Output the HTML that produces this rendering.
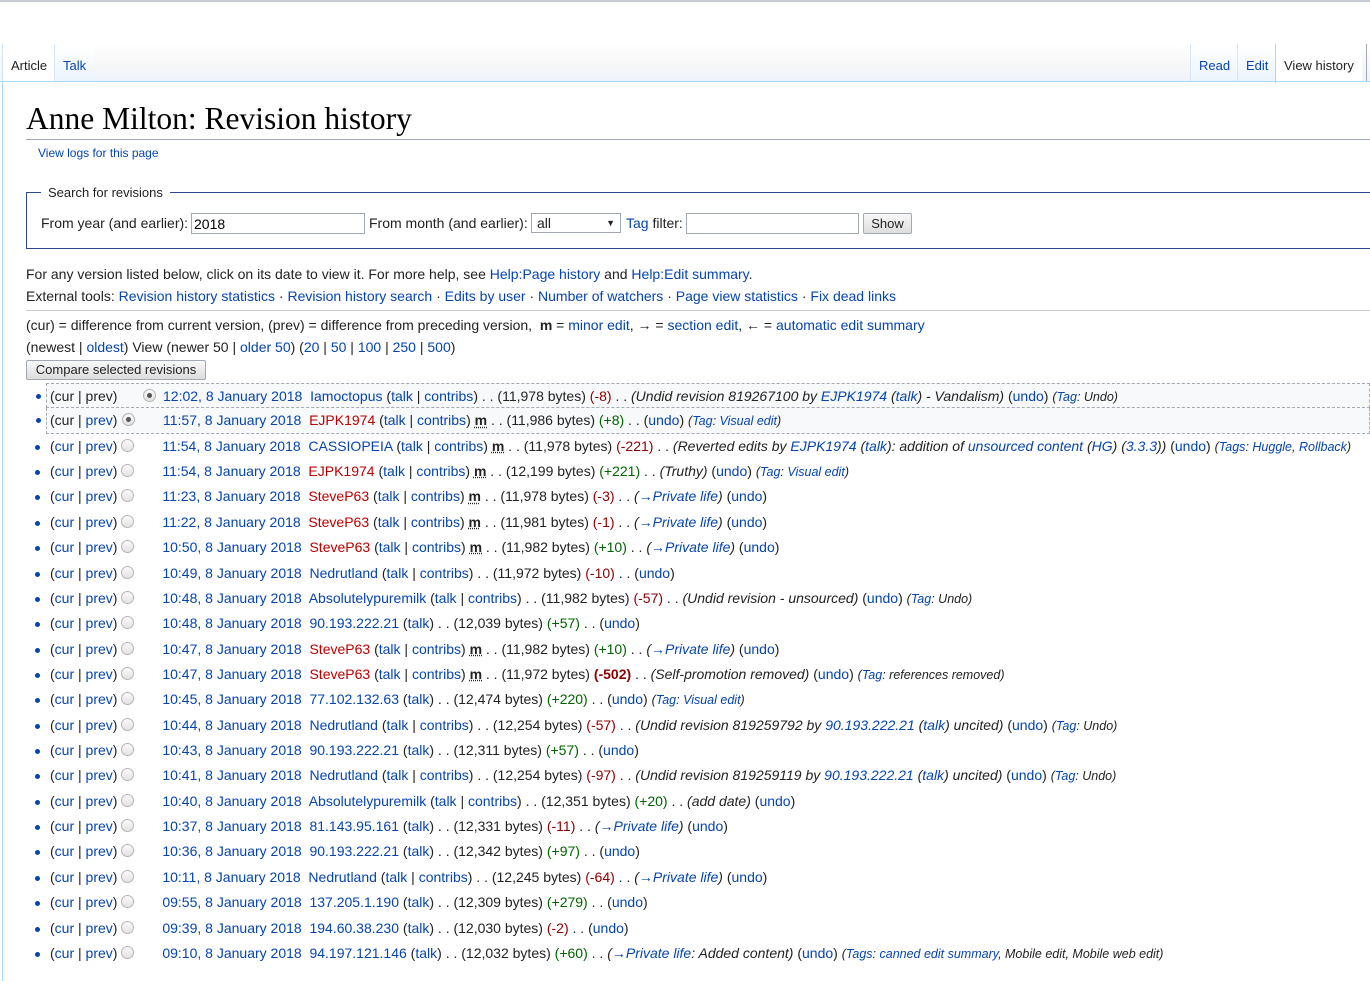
<!DOCTYPE html>
<html><head><meta charset="utf-8"><style>
*{margin:0;padding:0;box-sizing:border-box}
body{width:1370px;height:969px;overflow:hidden;background:#fff;font-family:"Liberation Sans",Arial,sans-serif;font-size:14px;color:#222;position:relative}
a{color:#0645ad;text-decoration:none}
.r{color:#ba0000}
.abs{position:absolute;white-space:nowrap}
#topline{position:absolute;left:0;top:0;width:1370px;height:2px;background:#c8ccd1}
#tabbar{position:absolute;left:0;top:44px;width:1370px;height:38px;background:linear-gradient(#fff,#f6f6f6 60%,#eef4fb);border-bottom:1px solid #a7d7f9}
.tab{position:absolute;top:44px;height:38px;line-height:44px;font-size:13px;padding:0 8px;border-left:1px solid #d5e6f5;background:linear-gradient(#fff 10%,#eaf3fb)}
.tab.sel{background:#fff;height:39px;color:#222}
#content{position:absolute;left:2px;top:81px;width:1368px;height:900px;border-left:1px solid #a7d7f9;border-top:1px solid #a7d7f9}
h1{position:absolute;left:26px;top:100px;font-family:"Liberation Serif",Georgia,serif;font-weight:normal;font-size:31.5px;color:#000;width:1344px;border-bottom:1px solid #a2a9b1;padding-bottom:1px;line-height:38px}
fieldset{position:absolute;left:26px;top:185px;width:1350px;height:64px;border:1px solid #2a4b8d;border-right:none}
legend{font-size:13px;margin-left:14px;padding:0 7px}
input.t{position:absolute;height:21px;border:1px solid #a2a9b1;font:14px "Liberation Sans",sans-serif;padding:1px 2px}
.hr{position:absolute;left:26px;width:1344px;height:1px;background:#c8ccd1}
ul{position:absolute;left:0;top:383px;list-style:none;width:1370px}
li{position:relative;height:25.36px;line-height:25.36px;white-space:nowrap;padding-left:50px}
li:before{content:"";position:absolute;left:35px;top:11px;width:5px;height:5px;border-radius:50%;background:#0645ad}
.hl{background:#f8f9fa;border:1px dashed #a2a9b1;margin-left:46px;padding-left:3px}
.hl:before{left:-11px;top:10px}
.radio{display:inline-block;width:13px;height:13px;border-radius:50%;border:1px solid #b5b5b5;background:linear-gradient(#fafafa,#e3e3e3);vertical-align:-1px;position:relative}
.radio.on:after{content:"";position:absolute;left:3px;top:3px;width:5px;height:5px;border-radius:50%;background:#555}
.cp{display:inline-block;width:93px}
.d{color:#0645ad;margin-left:28px}
.c{font-style:italic;color:#222}
.c a{color:#0645ad}
.tg{font-style:italic;font-size:12.5px}
.g{color:#006400}
.n{color:#8b0000}
b.m{text-decoration:underline dotted;font-weight:bold}
</style></head><body>
<div id="topline"></div>
<div id="tabbar"></div>
<div class="tab sel" style="left:2px">Article</div>
<div class="tab" style="left:54px"><a>Talk</a></div>
<div class="tab" style="left:1190px"><a>Read</a></div>
<div class="tab" style="left:1237px"><a>Edit</a></div>
<div class="tab sel" style="left:1275px;border-left:1px solid #a7d7f9">View history</div>
<div class="tab" style="left:1366px;border-left:1px solid #a2a9b1;width:6px"></div>
<div id="content"></div>
<h1>Anne Milton: Revision history</h1>
<div class="abs" style="left:38px;top:146px;font-size:12px"><a>View logs for this page</a></div>
<fieldset><legend>Search for revisions</legend></fieldset>
<div class="abs" style="left:41px;top:215px">From year (and earlier):</div>
<input class="t" style="left:191px;top:213px;width:174px" value="2018">
<div class="abs" style="left:369px;top:215px">From month (and earlier):</div>
<div class="abs" style="left:531px;top:213px;width:90px;height:20px;border:1px solid #a2a9b1;font-size:14px;padding-left:5px;line-height:18px">all<span style="position:absolute;right:5px;font-size:9px">▼</span></div>
<div class="abs" style="left:626px;top:215px"><a>Tag</a> filter:</div>
<input class="t" style="left:686px;top:213px;width:173px">
<div class="abs" style="left:863px;top:213px;width:49px;height:21px;border:1px solid #a2a9b1;border-radius:2px;background:linear-gradient(#f8f8f8,#ddd);font-size:13px;text-align:center;line-height:19px">Show</div>
<div class="abs" style="left:26px;top:266px">For any version listed below, click on its date to view it. For more help, see <a>Help:Page history</a> and <a>Help:Edit summary</a>.</div>
<div class="abs" style="left:26px;top:288px">External tools: <a>Revision history statistics</a> · <a>Revision history search</a> · <a>Edits by user</a> · <a>Number of watchers</a> · <a>Page view statistics</a> · <a>Fix dead links</a></div>
<div class="hr" style="top:310px"></div>
<div class="abs" style="left:26px;top:317px">(cur) = difference from current version, (prev) = difference from preceding version, &nbsp;<b>m</b> = <a>minor edit</a>, → = <a>section edit</a>, ← = <a>automatic edit summary</a></div>
<div class="abs" style="left:26px;top:339px">(newest | <a>oldest</a>) View (newer 50 | <a>older 50</a>) (<a>20</a> | <a>50</a> | <a>100</a> | <a>250</a> | <a>500</a>)</div>
<div class="abs" style="left:26px;top:360px;width:180px;height:20px;border:1px solid #a2a9b1;border-radius:2px;background:linear-gradient(#f8f8f8,#ddd);font-size:13px;text-align:center;line-height:18px">Compare selected revisions</div>
<ul>
<li class="hl"><span class="cp">(cur | prev)</span><span class="radio on"></span><span class="d" style="margin-left:7px">12:02, 8 January 2018</span>&nbsp; <a>Iamoctopus</a> (<a>talk</a> | <a>contribs</a>) . . (11,978 bytes) <span class="n">(-8)</span> . . <span class="c">(Undid revision 819267100 by <a>EJPK1974</a> (<a>talk</a>) - Vandalism)</span> (<a>undo</a>) <span class="tg">(<a>Tag</a>: Undo)</span></li>
<li class="hl" style="border-top:none"><span style="display:inline-block;width:72px">(cur | <a>prev</a>)</span><span class="radio on"></span><span class="d">11:57, 8 January 2018</span>&nbsp; <a class="r">EJPK1974</a> (<a>talk</a> | <a>contribs</a>) <b class="m">m</b> . . (11,986 bytes) <span class="g">(+8)</span> . . (<a>undo</a>) <span class="tg">(<a>Tag</a>: <a>Visual edit</a>)</span></li>
<li>(<a>cur</a> | <a>prev</a>) <span class="radio"></span><span class="d">11:54, 8 January 2018</span>&nbsp; <a>CASSIOPEIA</a> (<a>talk</a> | <a>contribs</a>) <b class="m">m</b> . . (11,978 bytes) <span class="n">(-221)</span> . . <span class="c">(Reverted edits by <a>EJPK1974</a> (<a>talk</a>): addition of <a>unsourced content</a> (<a>HG</a>) (<a>3.3.3</a>))</span> (<a>undo</a>) <span class="tg">(<a>Tags</a>: <a>Huggle</a>, <a>Rollback</a>)</span></li>
<li>(<a>cur</a> | <a>prev</a>) <span class="radio"></span><span class="d">11:54, 8 January 2018</span>&nbsp; <a class="r">EJPK1974</a> (<a>talk</a> | <a>contribs</a>) <b class="m">m</b> . . (12,199 bytes) <span class="g">(+221)</span> . . <span class="c">(Truthy)</span> (<a>undo</a>) <span class="tg">(<a>Tag</a>: <a>Visual edit</a>)</span></li>
<li>(<a>cur</a> | <a>prev</a>) <span class="radio"></span><span class="d">11:23, 8 January 2018</span>&nbsp; <a class="r">SteveP63</a> (<a>talk</a> | <a>contribs</a>) <b class="m">m</b> . . (11,978 bytes) <span class="n">(-3)</span> . . <span class="c">(<a>→Private life</a>)</span> (<a>undo</a>)</li>
<li>(<a>cur</a> | <a>prev</a>) <span class="radio"></span><span class="d">11:22, 8 January 2018</span>&nbsp; <a class="r">SteveP63</a> (<a>talk</a> | <a>contribs</a>) <b class="m">m</b> . . (11,981 bytes) <span class="n">(-1)</span> . . <span class="c">(<a>→Private life</a>)</span> (<a>undo</a>)</li>
<li>(<a>cur</a> | <a>prev</a>) <span class="radio"></span><span class="d">10:50, 8 January 2018</span>&nbsp; <a class="r">SteveP63</a> (<a>talk</a> | <a>contribs</a>) <b class="m">m</b> . . (11,982 bytes) <span class="g">(+10)</span> . . <span class="c">(<a>→Private life</a>)</span> (<a>undo</a>)</li>
<li>(<a>cur</a> | <a>prev</a>) <span class="radio"></span><span class="d">10:49, 8 January 2018</span>&nbsp; <a>Nedrutland</a> (<a>talk</a> | <a>contribs</a>) . . (11,972 bytes) <span class="n">(-10)</span> . . (<a>undo</a>)</li>
<li>(<a>cur</a> | <a>prev</a>) <span class="radio"></span><span class="d">10:48, 8 January 2018</span>&nbsp; <a>Absolutelypuremilk</a> (<a>talk</a> | <a>contribs</a>) . . (11,982 bytes) <span class="n">(-57)</span> . . <span class="c">(Undid revision - unsourced)</span> (<a>undo</a>) <span class="tg">(<a>Tag</a>: Undo)</span></li>
<li>(<a>cur</a> | <a>prev</a>) <span class="radio"></span><span class="d">10:48, 8 January 2018</span>&nbsp; <a>90.193.222.21</a> (<a>talk</a>) . . (12,039 bytes) <span class="g">(+57)</span> . . (<a>undo</a>)</li>
<li>(<a>cur</a> | <a>prev</a>) <span class="radio"></span><span class="d">10:47, 8 January 2018</span>&nbsp; <a class="r">SteveP63</a> (<a>talk</a> | <a>contribs</a>) <b class="m">m</b> . . (11,982 bytes) <span class="g">(+10)</span> . . <span class="c">(<a>→Private life</a>)</span> (<a>undo</a>)</li>
<li>(<a>cur</a> | <a>prev</a>) <span class="radio"></span><span class="d">10:47, 8 January 2018</span>&nbsp; <a class="r">SteveP63</a> (<a>talk</a> | <a>contribs</a>) <b class="m">m</b> . . (11,972 bytes) <b class="n">(-502)</b> . . <span class="c">(Self-promotion removed)</span> (<a>undo</a>) <span class="tg">(<a>Tag</a>: references removed)</span></li>
<li>(<a>cur</a> | <a>prev</a>) <span class="radio"></span><span class="d">10:45, 8 January 2018</span>&nbsp; <a>77.102.132.63</a> (<a>talk</a>) . . (12,474 bytes) <span class="g">(+220)</span> . . (<a>undo</a>) <span class="tg">(<a>Tag</a>: <a>Visual edit</a>)</span></li>
<li>(<a>cur</a> | <a>prev</a>) <span class="radio"></span><span class="d">10:44, 8 January 2018</span>&nbsp; <a>Nedrutland</a> (<a>talk</a> | <a>contribs</a>) . . (12,254 bytes) <span class="n">(-57)</span> . . <span class="c">(Undid revision 819259792 by <a>90.193.222.21</a> (<a>talk</a>) uncited)</span> (<a>undo</a>) <span class="tg">(<a>Tag</a>: Undo)</span></li>
<li>(<a>cur</a> | <a>prev</a>) <span class="radio"></span><span class="d">10:43, 8 January 2018</span>&nbsp; <a>90.193.222.21</a> (<a>talk</a>) . . (12,311 bytes) <span class="g">(+57)</span> . . (<a>undo</a>)</li>
<li>(<a>cur</a> | <a>prev</a>) <span class="radio"></span><span class="d">10:41, 8 January 2018</span>&nbsp; <a>Nedrutland</a> (<a>talk</a> | <a>contribs</a>) . . (12,254 bytes) <span class="n">(-97)</span> . . <span class="c">(Undid revision 819259119 by <a>90.193.222.21</a> (<a>talk</a>) uncited)</span> (<a>undo</a>) <span class="tg">(<a>Tag</a>: Undo)</span></li>
<li>(<a>cur</a> | <a>prev</a>) <span class="radio"></span><span class="d">10:40, 8 January 2018</span>&nbsp; <a>Absolutelypuremilk</a> (<a>talk</a> | <a>contribs</a>) . . (12,351 bytes) <span class="g">(+20)</span> . . <span class="c">(add date)</span> (<a>undo</a>)</li>
<li>(<a>cur</a> | <a>prev</a>) <span class="radio"></span><span class="d">10:37, 8 January 2018</span>&nbsp; <a>81.143.95.161</a> (<a>talk</a>) . . (12,331 bytes) <span class="n">(-11)</span> . . <span class="c">(<a>→Private life</a>)</span> (<a>undo</a>)</li>
<li>(<a>cur</a> | <a>prev</a>) <span class="radio"></span><span class="d">10:36, 8 January 2018</span>&nbsp; <a>90.193.222.21</a> (<a>talk</a>) . . (12,342 bytes) <span class="g">(+97)</span> . . (<a>undo</a>)</li>
<li>(<a>cur</a> | <a>prev</a>) <span class="radio"></span><span class="d">10:11, 8 January 2018</span>&nbsp; <a>Nedrutland</a> (<a>talk</a> | <a>contribs</a>) . . (12,245 bytes) <span class="n">(-64)</span> . . <span class="c">(<a>→Private life</a>)</span> (<a>undo</a>)</li>
<li>(<a>cur</a> | <a>prev</a>) <span class="radio"></span><span class="d">09:55, 8 January 2018</span>&nbsp; <a>137.205.1.190</a> (<a>talk</a>) . . (12,309 bytes) <span class="g">(+279)</span> . . (<a>undo</a>)</li>
<li>(<a>cur</a> | <a>prev</a>) <span class="radio"></span><span class="d">09:39, 8 January 2018</span>&nbsp; <a>194.60.38.230</a> (<a>talk</a>) . . (12,030 bytes) <span class="n">(-2)</span> . . (<a>undo</a>)</li>
<li>(<a>cur</a> | <a>prev</a>) <span class="radio"></span><span class="d">09:10, 8 January 2018</span>&nbsp; <a>94.197.121.146</a> (<a>talk</a>) . . (12,032 bytes) <span class="g">(+60)</span> . . <span class="c">(<a>→Private life</a>: Added content)</span> (<a>undo</a>) <span class="tg">(<a>Tags</a>: <a>canned edit summary</a>, Mobile edit, Mobile web edit)</span></li>
</ul>
</body></html>
